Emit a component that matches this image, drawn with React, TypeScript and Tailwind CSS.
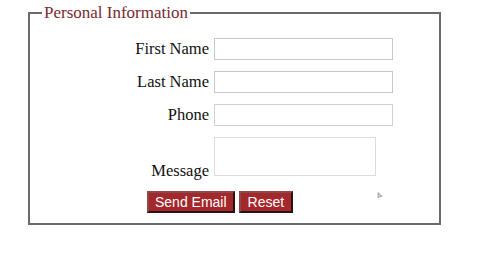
import React from 'react';

const serif = { fontFamily: '"Liberation Serif", "Times New Roman", serif' };
const sans = { fontFamily: '"Liberation Sans", Arial, sans-serif' };

function Row({ label, children, alignEnd = false }: { label: string; children: React.ReactNode; alignEnd?: boolean }) {
  return (
    <div className={`flex gap-[5px] ${alignEnd ? 'items-end' : 'items-center'}`}>
      <label
        className={`w-[167px] text-right text-[16.5px] leading-[18px] text-[#111] ${alignEnd ? 'mb-[-4px]' : ''}`}
        style={serif}
      >
        {label}
      </label>
      {children}
    </div>
  );
}

export default function App() {
  return (
    <div className="relative h-[270px] w-[480px] overflow-hidden bg-white">
      <form>
        <fieldset className="ml-[28px] mt-[3px] w-[413px] border-2 border-[#6a6a6a] pb-[10px] pl-[12px]">
          <legend className="px-[2px] text-[17px] leading-[20px] text-[#7a2a30]" style={serif}>
            Personal Information
          </legend>

          <div className="flex flex-col gap-[11px] pt-[15px]">
            <Row label="First Name">
              <input type="text" className="h-[22px] w-[179px] border border-[#c8c8c8] bg-white" />
            </Row>
            <Row label="Last Name">
              <input type="text" className="h-[22px] w-[179px] border border-[#c8c8c8] bg-white" />
            </Row>
            <Row label="Phone">
              <input type="text" className="h-[22px] w-[179px] border border-[#d0d0d0] bg-white" />
            </Row>
            <Row label="Message" alignEnd>
              <textarea className="h-[39px] w-[162px] resize-none border border-[#dcdcdc] bg-white" />
            </Row>
          </div>

          <div className="mt-[15px] flex gap-[4px] pl-[105px]">
            <button
              type="button"
              className="h-[22px] border-2 border-t-[#8a4a4a] border-l-[#8a4a4a] border-b-[#2a1212] border-r-[#2a1212] bg-[#a3272b] px-[6px] text-[14px] leading-[16px] text-white"
              style={sans}
            >
              Send Email
            </button>
            <button
              type="reset"
              className="h-[22px] border-2 border-t-[#8a4a4a] border-l-[#8a4a4a] border-b-[#2a1212] border-r-[#2a1212] bg-[#a3272b] px-[7px] text-[14px] leading-[16px] text-white"
              style={sans}
            >
              Reset
            </button>
          </div>
        </fieldset>
      </form>

      {/* mouse pointer */}
      <svg className="absolute left-[377px] top-[192px]" width="6" height="7" viewBox="0 0 6 7">
        <path d="M1 0.5 L1 6 L2.5 4.6 L5.2 4.4 Z" fill="#c8c8c8" stroke="#8a8a8a" strokeWidth="0.6" />
      </svg>
    </div>
  );
}
